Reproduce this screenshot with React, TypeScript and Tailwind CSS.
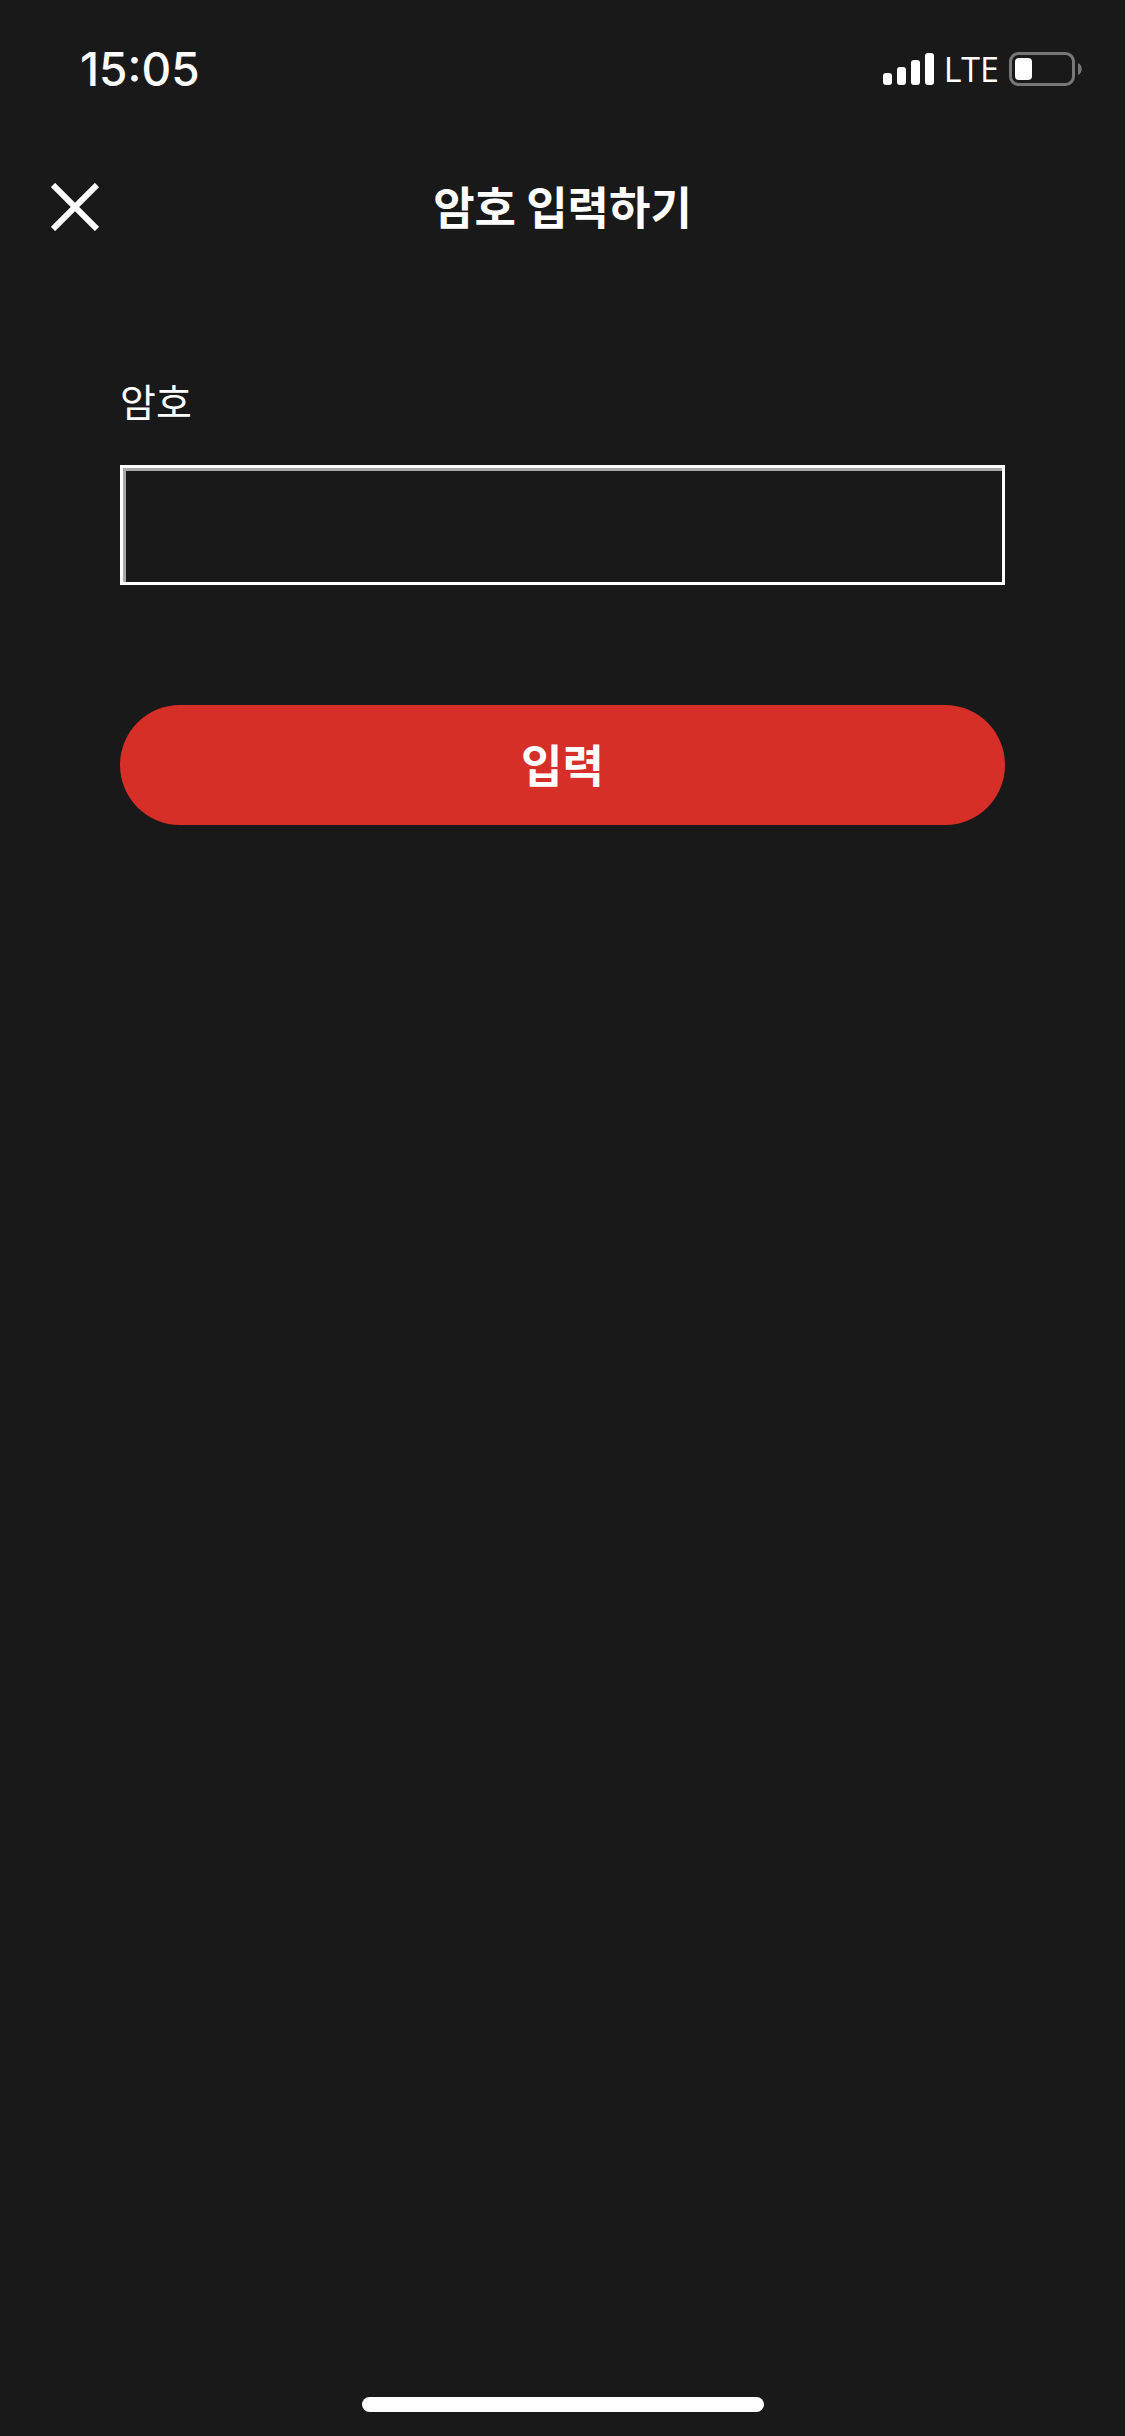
import { useState } from "react";

function StatusBar() {
  return (
    <div className="flex h-[138px] items-center justify-between pr-[43px] pl-20">
      <span className="font-['Inter'] text-[46px] leading-none font-medium">15:05</span>
      <div className="flex items-center gap-[10px]">
        <svg className="h-8 w-[51px]" viewBox="0 0 51 32" fill="currentColor" aria-hidden="true">
          <rect x="0" y="20" width="9" height="12" rx="3" />
          <rect x="14" y="14" width="9" height="18" rx="3" />
          <rect x="28" y="7" width="9" height="25" rx="3" />
          <rect x="42" y="0" width="9" height="32" rx="3" />
        </svg>
        <span className="font-['Open_Sans','Noto_Sans',sans-serif] text-[34px] leading-none font-medium">LTE</span>
        <svg className="h-[34px] w-[73px]" viewBox="0 0 73 34" aria-hidden="true">
          <rect x="1.5" y="1.5" width="63" height="31" rx="8" fill="none" stroke="#777777" strokeWidth="3" />
          <rect x="6" y="6" width="17" height="22" rx="4" fill="currentColor" />
          <path d="M69 11c5 2 5 10 0 12z" fill="#777777" />
        </svg>
      </div>
    </div>
  );
}

function App() {
  const [password, setPassword] = useState("");

  return (
    <div className="flex min-h-screen flex-col bg-[#191919] font-['Noto_Sans_CJK_KR',sans-serif] text-white">
      <StatusBar />

      <header className="grid h-[138px] grid-cols-[1fr_auto_1fr] items-center px-[51px]">
        <button type="button" aria-label="닫기" className="size-12">
          <svg className="size-12" viewBox="0 0 48 48" fill="none" stroke="currentColor" strokeWidth="6" aria-hidden="true">
            <path d="M2 2l44 44M46 2L2 46" />
          </svg>
        </button>
        <h1 className="pb-1 text-[45px] leading-none font-bold">암호 입력하기</h1>
      </header>

      <form className="flex flex-col px-[120px] pt-[100px]" onSubmit={(e) => e.preventDefault()}>
        <label htmlFor="password" className="text-[39px] leading-[48px]">암호</label>
        <input
          id="password"
          type="password"
          value={password}
          onChange={(e) => setPassword(e.target.value)}
          className="mt-[41px] h-[120px] w-full border-[3px] border-white bg-transparent px-6 text-[39px] shadow-[inset_3px_3px_0_#aaaaaa] outline-none"
        />
        <button type="submit" className="mt-[120px] h-[120px] rounded-full bg-[#d62f28] pb-1 text-[45px] leading-none font-bold">
          입력
        </button>
      </form>

      <div className="mx-auto mt-auto mb-6 h-[15px] w-[402px] rounded-full bg-white" />
    </div>
  );
}

export default App;
